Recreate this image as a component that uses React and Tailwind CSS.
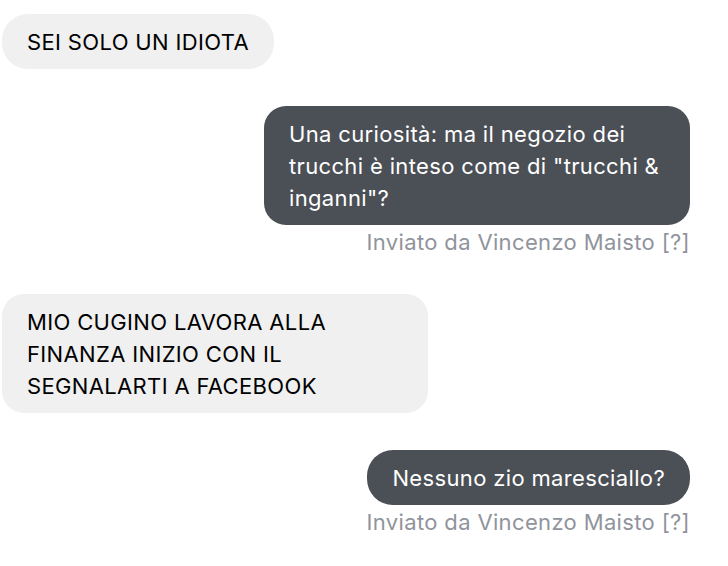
import React from 'react';

const messages = [
    {from: 'them', text: 'SEI SOLO UN IDIOTA', short: true},
    {from: 'me', text: 'Una curiosità: ma il negozio dei trucchi è inteso come di "trucchi & inganni"?'},
    {from: 'them', text: 'MIO CUGINO LAVORA ALLA FINANZA INIZIO CON IL SEGNALARTI A FACEBOOK'},
    {from: 'me', text: 'Nessuno zio maresciallo?', short: true},
];

function Bubble({from, text, short}) {
    const mine = from === 'me';
    const shape = short ? 'rounded-[26px]' : 'rounded-[22px]';
    return (
        <div className={mine ? 'flex flex-col items-end' : 'flex flex-col items-start'}>
            <div
                className={
                    (mine
                        ? 'bg-[#4b4f56] text-white'
                        : 'bg-[#f0f0f0] text-black') +
                    ' max-w-[426px] px-[25px] pt-[12px] pb-[11px] text-[22px] leading-[32px] tracking-[0.35px] ' +
                    shape
                }
            >
                {text}
            </div>
            {mine && (
                <div className="mt-[3px] mb-[1px] text-[22px] leading-[28px] tracking-[0.35px] text-[#90949c]">
                    Inviato da Vincenzo Maisto [?]
                </div>
            )}
        </div>
    );
}

export default function App() {
    return (
        <div
            className="flex h-[566px] w-[728px] flex-col gap-[37px] bg-white pl-[2px] pr-[38px] pt-[14px]"
            style={{fontFamily: 'Inter, "Liberation Sans", Arial, sans-serif'}}
        >
            {messages.map((m, i) => (
                <Bubble key={i} {...m}/>
            ))}
        </div>
    );
}
